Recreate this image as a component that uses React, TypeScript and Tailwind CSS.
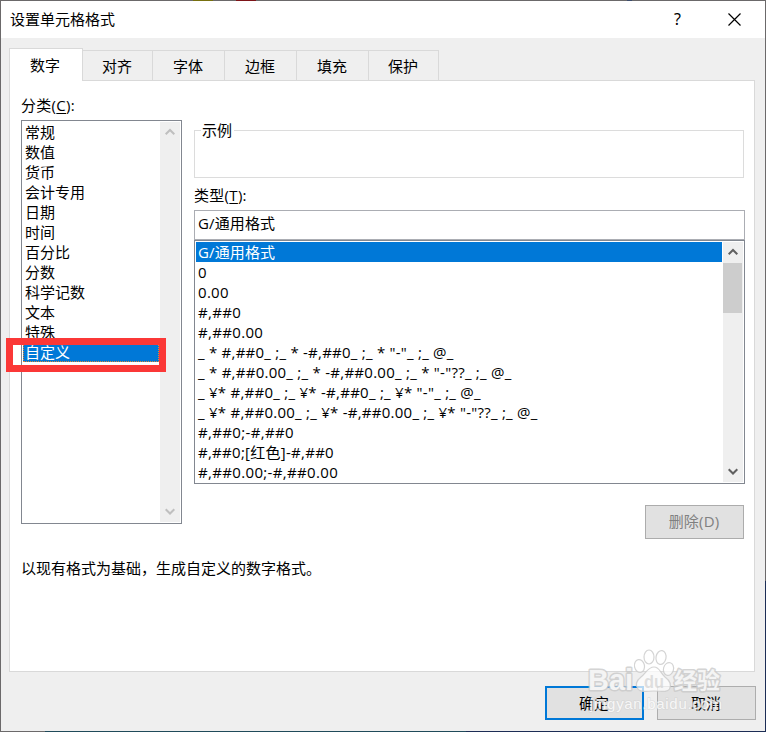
import { clsx } from "clsx";

const tabs = [
  { label: "对齐", width: "w-[70px]" },
  { label: "字体", width: "w-[72px]" },
  { label: "边框", width: "w-[72px]" },
  { label: "填充", width: "w-[72px]" },
  { label: "保护", width: "w-[70px]" },
];

const categories = [
  "常规",
  "数值",
  "货币",
  "会计专用",
  "日期",
  "时间",
  "百分比",
  "分数",
  "科学记数",
  "文本",
  "特殊",
  "自定义",
];

const formats = [
  { code: "G/通用格式", tracking: "tracking-[0.14px]" },
  { code: "0", tracking: "tracking-normal" },
  { code: "0.00", tracking: "tracking-[0.3px]" },
  { code: "#,##0", tracking: "tracking-[0.33px]" },
  { code: "#,##0.00", tracking: "tracking-[0.33px]" },
  { code: '_ * #,##0_ ;_ * -#,##0_ ;_ * "-"_ ;_ @_ ', tracking: "tracking-[0.24px]" },
  { code: '_ * #,##0.00_ ;_ * -#,##0.00_ ;_ * "-"??_ ;_ @_ ', tracking: "tracking-[0.26px]" },
  { code: '_ ¥* #,##0_ ;_ ¥* -#,##0_ ;_ ¥* "-"_ ;_ @_ ', tracking: "tracking-[0.26px]" },
  { code: '_ ¥* #,##0.00_ ;_ ¥* -#,##0.00_ ;_ ¥* "-"??_ ;_ @_ ', tracking: "tracking-[0.25px]" },
  { code: "#,##0;-#,##0", tracking: "tracking-[0.34px]" },
  { code: "#,##0;[红色]-#,##0", tracking: "tracking-[0.27px]" },
  { code: "#,##0.00;-#,##0.00", tracking: "tracking-[0.34px]" },
];

function Arrow({ down, className }: { down?: boolean; className?: string }) {
  return (
    <svg width="10" height="8" viewBox="0 0 10 8" className={className} fill="none" stroke="currentColor" strokeWidth="2">
      <path d={down ? "M0.7 1.2 L5 5.5 L9.3 1.2" : "M0.7 6.3 L5 2 L9.3 6.3"} />
    </svg>
  );
}

function Watermark() {
  return (
    <svg className="pointer-events-none absolute left-[580px] top-[645px]" width="160" height="80" viewBox="0 0 160 80">
      <g fill="#ffffff" fillOpacity="0.7" stroke="#c9c9c9" strokeOpacity="0.8" strokeWidth="1.200">
        <ellipse cx="59.500" cy="21" rx="5" ry="6.500" transform="rotate(-12 59.500 21)" />
        <ellipse cx="69" cy="12" rx="5" ry="7" />
        <ellipse cx="81" cy="12.500" rx="5" ry="7" transform="rotate(10 81 12.500)" />
        <ellipse cx="88.500" cy="24" rx="5" ry="6.500" transform="rotate(15 88.500 24)" />
        <path d="M74 22 C68 22 66 28 61 32 C56 36 55 40 58 44 C61 48 67 46 74 46 C81 46 87 48 89.500 44 C92 39 89 35 85 32 C80 28 80 22 74 22 Z" />
        <g
          fontFamily="'Liberation Sans', 'Noto Sans CJK SC', sans-serif"
          fontWeight="700"
          strokeWidth="3"
          paintOrder="stroke"
          strokeLinejoin="round"
          fillOpacity="1"
        >
          <text x="8" y="45" fontSize="30" textLength="45" lengthAdjust="spacingAndGlyphs" fill="#f4f4f4">Bai</text>
          <text x="94" y="44" fontSize="23" textLength="46" fill="#f4f4f4">经验</text>
        </g>
        <text
          x="64"
          y="43"
          fontSize="18"
          fontFamily="'Liberation Sans', sans-serif"
          fontWeight="700"
          textLength="20"
          lengthAdjust="spacingAndGlyphs"
          fill="#d2d2d2"
          stroke="none"
        >
          du
        </text>
      </g>
      <text
        x="10"
        y="64"
        fontSize="15"
        fontFamily="'Liberation Sans', sans-serif"
        fill="#ffffff"
        fillOpacity="0.8"
        stroke="#d0d0d0"
        strokeOpacity="0.5"
        strokeWidth="1.500"
        paintOrder="stroke"
        textLength="132"
      >
        jingyan.baidu.com
      </text>
    </svg>
  );
}

export default function App() {
  return (
    <div className="relative flex h-[732px] w-[766px] flex-col overflow-hidden bg-[#efefef] font-['Open_Sans','Noto_Sans_CJK_SC',sans-serif] text-[15px] leading-5 text-black">
      {/* Strip of the sheet showing above the dialog */}
      <div className="flex h-px bg-[#6b696a]">
        <div className="ml-[193px] w-5 bg-[#77700f]" />
        <div className="ml-[23px] w-5 bg-[#7d1418]" />
        <div className="ml-[371px] w-[5px] bg-[#3b4c6b]" />
      </div>

      <div className="flex h-[730px]">
        <div className="w-px bg-[#6b696a]" />

        <div className="flex w-[764px] flex-col">
          <div className="flex h-[37px] items-center bg-white pl-[9px]">
            <span className="flex-1 pb-[2px]">设置单元格格式</span>
            <span className="mr-[46px] w-[9px] pb-[2px] text-center font-['Noto_Sans',sans-serif] text-base">?</span>
            <svg width="13" height="13" viewBox="0 0 13 13" className="mr-[24px]" stroke="#000" strokeWidth="1.200">
              <path d="M0.500 0.500 L12.500 12.500 M12.500 0.500 L0.500 12.500" />
            </svg>
          </div>

          <div className="flex flex-1 flex-col pl-2 pr-[10px] pt-[10px]">
            {/* Tabs */}
            <div className="flex h-[33px] items-end">
              <div className="z-10 flex h-[33px] w-[74px] items-center justify-center border border-b-0 border-[#d9d9d9] bg-white pb-px pr-[2px]">
                数字
              </div>
              {tabs.map((tab) => (
                <div
                  key={tab.label}
                  className={clsx(
                    "flex h-[31px] items-center justify-center border border-l-0 border-[#d9d9d9] bg-[#efefef] pr-px",
                    tab.width
                  )}
                >
                  {tab.label}
                </div>
              ))}
              <div className="h-px flex-1 bg-[#d9d9d9]" />
            </div>

            <div className="flex h-[591px] flex-col border border-t-0 border-[#d9d9d9] bg-white pl-[11px] pr-[9px]">
              <div className="flex h-[443px] gap-3">
                {/* Category list */}
                <div className="w-[161px]">
                  <div className="h-[39px] pt-[14px] tracking-[0.3px]">
                    分类(<span className="underline underline-offset-2">C</span>):
                  </div>
                  <div className="flex h-[404px] border border-[#828790] p-px">
                    <div className="w-[137px]">
                      {categories.map((name) => (
                        <div
                          key={name}
                          className={clsx(
                            "h-5 w-[136px] pl-[2px]",
                            name === "自定义" && "bg-[#0078d7] text-white outline-1 -outline-offset-1 outline-dotted outline-[#e08a35]"
                          )}
                        >
                          {name}
                        </div>
                      ))}
                    </div>
                    <div className="flex w-5 flex-col items-center justify-between bg-[#efefef] py-[6px] pr-px text-[#bfbfbf]">
                      <Arrow />
                      <Arrow down />
                    </div>
                  </div>
                </div>

                {/* Sample, type and format codes */}
                <div className="w-[551px]">
                  <fieldset className="mt-[39px] h-[58px] w-[550px] border border-[#dcdcdc] pl-[6px]">
                    <legend className="pl-px pr-[2px]">示例</legend>
                  </fieldset>
                  <div className="h-8 pt-[7px] tracking-[0.3px]">
                    类型(<span className="underline underline-offset-2">T</span>):
                  </div>
                  <div className="flex h-[30px] items-center border border-[#abadb3] pb-1 pl-[3px] tracking-[0.14px]">
                    G/通用格式
                  </div>
                  <div className="flex h-[244px] border border-[#828790] p-px">
                    <div className="w-[527px] overflow-hidden">
                      {formats.map((format, i) => (
                        <div
                          key={format.code}
                          className={clsx(
                            "h-5 w-[526px] whitespace-pre pl-[2px]",
                            format.tracking,
                            i === 0 && "bg-[#0078d7] text-white"
                          )}
                        >
                          {format.code}
                        </div>
                      ))}
                    </div>
                    <div className="flex w-5 flex-col items-center bg-[#efefef] py-[6px] pr-px text-[#606060]">
                      <Arrow />
                      <div className="mt-[7px] h-[50px] w-[19px] self-start bg-[#cdcdcd]" />
                      <Arrow down className="mt-auto" />
                    </div>
                  </div>
                  <div className="mt-[21px] flex h-[34px] justify-end pr-px">
                    <button
                      disabled
                      className="flex w-[99px] items-center justify-center border border-[#acacac] bg-[#e1e1e1] pb-[2px] pr-px text-[#808080] tracking-[0.2px]"
                    >
                      删除(D)
                    </button>
                  </div>
                </div>
              </div>
              <p className="mt-[34px]">以现有格式为基础，生成自定义的数字格式。</p>
            </div>
          </div>

          <div className="mb-[11px] flex h-[34px] justify-end gap-[13px] pr-[9px]">
            <button className="w-[99px] border-2 border-[#0078d7] bg-[#e1e1e1] pr-px">确定</button>
            <button className="w-[99px] border border-[#adadad] bg-[#e1e1e1] pr-px">取消</button>
          </div>
        </div>

        <div className="flex w-px flex-col bg-[#6b696a]">
          <div className="mt-auto h-[150px] bg-[#1c2d55]" />
        </div>
      </div>

      <div className="flex h-px bg-[#6b696a]">
        <div className="ml-[45px] flex-1 bg-[#1f4a5a]" />
        <div className="w-[300px] bg-[#1c2d55]" />
      </div>

      {/* Red marker around the custom category */}
      <div className="absolute left-[6px] top-[338px] h-[34px] w-[160px] border-7 border-[#fb3837]" />
      <Watermark />
    </div>
  );
}
